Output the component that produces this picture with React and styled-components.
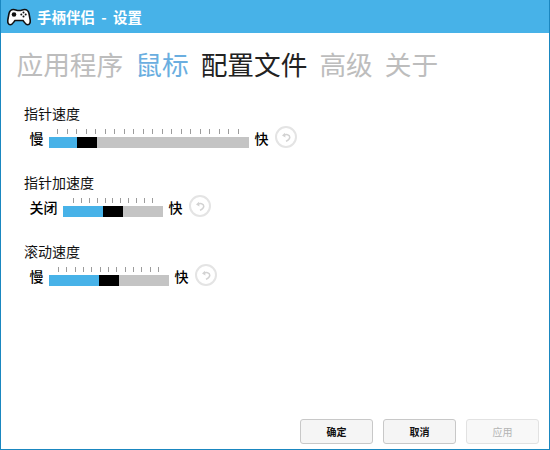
import React from 'react'
import styled, { createGlobalStyle } from 'styled-components'

const Global = createGlobalStyle`
	html, body {
		margin: 0;
		padding: 0;
		background: #fff;
	}
	body {
		font-family: "Noto Sans CJK SC", "Noto Sans", sans-serif;
	}
`

const Window = styled.div`
	width: 550px;
	height: 450px;
	box-sizing: border-box;
	border: 1px solid #1a87c0;
	border-top: none;
	display: flex;
	flex-direction: column;
	background: #fff;
	overflow: hidden;
`

const TitleBar = styled.div`
	height: 33px;
	flex: none;
	margin: 0 -1px;
	background: #47b2e8;
	display: flex;
	align-items: center;
	padding-left: 7px;
	gap: 6px;
	color: #fff;
	font-size: 14.500px;
	font-weight: 700;
	word-spacing: 3px;
`

const Tabs = styled.div`
	display: flex;
	gap: 12px;
	padding: 9px 0 0 15.500px;
	height: 43px;
	align-items: center;
	box-sizing: content-box;
`

const Tab = styled.div`
	font-size: 26.700px;
	line-height: 36px;
	color: ${p => p.$color};
`

const Content = styled.div`
	flex: 1;
	padding: 18px 0 0 23px;
	display: flex;
	flex-direction: column;
	gap: 23px;
`

const Setting = styled.div`
	display: flex;
	flex-direction: column;
`

const SettingTitle = styled.div`
	font-size: 14px;
	line-height: 20px;
	color: #111;
`

const Row = styled.div`
	display: flex;
	align-items: flex-end;
	margin-top: 4px;
	height: 22px;
`

const EndLabel = styled.div`
	font-size: 14px;
	font-weight: 500;
	line-height: 20px;
	color: #000;
	width: ${p => p.$width}px;
	margin-bottom: 1px;
	text-align: center;
	flex: none;
`

const Slider = styled.div`
	width: ${p => p.$width}px;
	flex: none;
	display: flex;
	flex-direction: column;
	gap: 3px;
	margin-bottom: 1px;
`

const Ticks = styled.div`
	display: flex;
	justify-content: space-between;
	padding: 0 ${p => p.$right}px 0 ${p => p.$left}px;
`

const Tick = styled.i`
	display: block;
	width: 1px;
	height: 5px;
	background: #9c9c9c;
`

const Track = styled.div`
	height: 11px;
	display: flex;
	background: #c4c4c4;
`

const Fill = styled.div`
	width: ${p => p.$width}px;
	background: ${p => p.$color};
	flex: none;
`

const ResetButton = styled.button`
	width: 22px;
	height: 22px;
	flex: none;
	padding: 0;
	margin-left: 1px;
	margin-bottom: 1px;
	border: 2px solid #e4e4e4;
	border-radius: 50%;
	background: #fff;
	display: flex;
	align-items: center;
	justify-content: center;
`

const Footer = styled.div`
	display: flex;
	justify-content: flex-end;
	gap: 10px;
	padding: 0 10px 5px 0;
`

const FooterButton = styled.button`
	width: 73px;
	height: 25px;
	box-sizing: border-box;
	border: 1px solid ${p => (p.disabled ? '#e2e2e2' : '#c8c8c8')};
	border-radius: 3px;
	background: ${p => (p.disabled ? '#f8f8f8' : '#f5f5f5')};
	color: ${p => (p.disabled ? '#b4b4b4' : '#111')};
	font-family: inherit;
	font-size: 10px;
	font-weight: ${p => (p.disabled ? 400 : 700)};
	padding: 0;
`

const GamepadLogo = () => (
	<svg width="24" height="20" viewBox="0 0 24 20">
		<path
			d="M6.500 2.500C4 2.500 2.600 4 2 6.500L.9 12.500C.4 15.500 1.300 17.800 3.300 17.800C5.300 17.800 6.500 15.300 8 13.500H16C17.500 15.300 18.700 17.800 20.700 17.800C22.700 17.800 23.600 15.500 23.100 12.500L22 6.500C21.400 4 20 2.500 17.500 2.500C15.500 2.500 14.800 3.500 12 3.500C9.200 3.500 8.500 2.500 6.500 2.500Z"
			fill="#fff"
			stroke="#111"
			strokeWidth="1.600"
		/>
		<circle cx="7" cy="7.500" r="2.300" fill="#111" />
		<circle cx="16.500" cy="5.500" r="1" fill="#111" />
		<circle cx="18.700" cy="7.500" r="1" fill="#111" />
		<circle cx="14.300" cy="7.500" r="1" fill="#111" />
		<circle cx="16.500" cy="9.500" r="1" fill="#111" />
	</svg>
)

const ResetIcon = () => (
	<svg width="11" height="11" viewBox="0 0 11 11" fill="none">
		<path d="M3 3.200C5 2 8.800 2.300 8.800 5.200C8.800 7.200 7 8.300 5 9.300" stroke="#d2d2d2" strokeWidth="1.500" />
		<path d="M4 .8L1 3.400L4.400 5.400Z" fill="#d2d2d2" />
	</svg>
)

const settings = [
	{ title: '指针速度', low: '慢', lowWidth: 26, width: 200, before: 28, ticks: 20, left: 8, right: 10 },
	{ title: '指针加速度', low: '关闭', lowWidth: 40, width: 100, before: 40, ticks: 11, left: 10, right: 10 },
	{ title: '滚动速度', low: '慢', lowWidth: 26, width: 120, before: 50, ticks: 13, left: 9, right: 10 },
]

const SliderRow = ({ s }) => (
	<Setting>
		<SettingTitle>{s.title}</SettingTitle>
		<Row>
			<EndLabel $width={s.lowWidth - 1}>{s.low}</EndLabel>
			<Slider $width={s.width}>
				<Ticks $left={s.left} $right={s.right}>
					{Array.from({ length: s.ticks }, (_, i) => <Tick key={i} />)}
				</Ticks>
				<Track>
					<Fill $width={s.before} $color="#47b2e8" />
					<Fill $width={20} $color="#000" />
				</Track>
			</Slider>
			<EndLabel $width={25}>快</EndLabel>
			<ResetButton><ResetIcon /></ResetButton>
		</Row>
	</Setting>
)

export default function App() {
	return (
		<Window>
			<Global />
			<TitleBar>
				<GamepadLogo />
				<span>手柄伴侣 - 设置</span>
			</TitleBar>
			<Tabs>
				<Tab $color="#bdbdbd">应用程序</Tab>
				<Tab $color="#6aaee0">鼠标</Tab>
				<Tab $color="#222">配置文件</Tab>
				<Tab $color="#bdbdbd">高级</Tab>
				<Tab $color="#bdbdbd">关于</Tab>
			</Tabs>
			<Content>
				{settings.map(s => <SliderRow key={s.title} s={s} />)}
			</Content>
			<Footer>
				<FooterButton>确定</FooterButton>
				<FooterButton>取消</FooterButton>
				<FooterButton disabled>应用</FooterButton>
			</Footer>
		</Window>
	)
}
